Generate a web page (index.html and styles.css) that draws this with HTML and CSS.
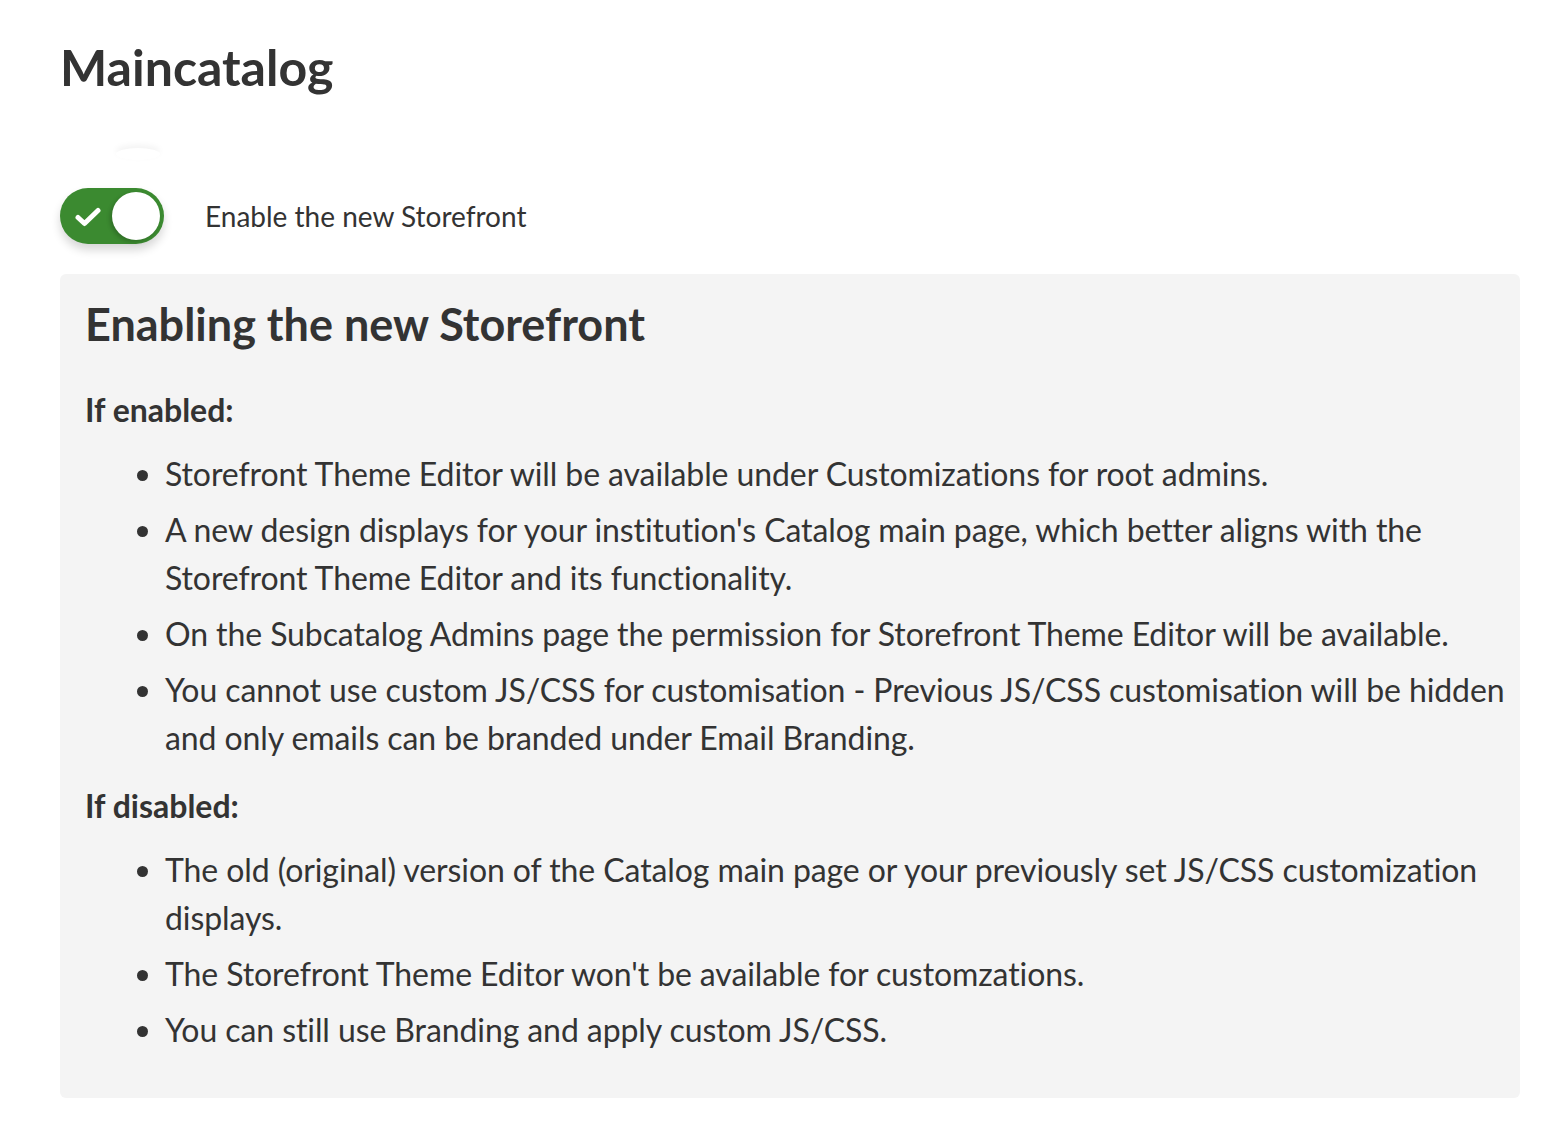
FILE: index.html
```html
<!DOCTYPE html>
<html lang="en">
<head>
<meta charset="utf-8">
<title>Maincatalog</title>
<link rel="stylesheet" href="styles.css">
</head>
<body>
<main class="page">
  <h1 class="title">Maincatalog</h1>
  <label class="toggle-row">
    <span class="toggle">
      <svg class="check" viewBox="0 0 26 20" width="26" height="20" aria-hidden="true">
        <path d="M3 10.5 L9.5 16.5 L23 3.5" fill="none" stroke="#fff" stroke-width="5" stroke-linecap="round" stroke-linejoin="round"/>
      </svg>
      <span class="knob"></span>
    </span>
    <span class="toggle-label">Enable the new Storefront</span>
  </label>
  <section class="info">
    <h2 class="info-title">Enabling the new Storefront</h2>
    <p class="info-sub">If enabled:</p>
    <ul class="info-list">
      <li>Storefront Theme Editor will be available under Customizations for root admins.</li>
      <li>A new design displays for your institution's Catalog main page, which better aligns with the Storefront Theme Editor and its functionality.</li>
      <li>On the Subcatalog Admins page the permission for Storefront Theme Editor will be available.</li>
      <li>You cannot use custom JS/CSS for customisation - Previous JS/CSS customisation will be hidden and only emails can be branded under Email Branding.</li>
    </ul>
    <p class="info-sub">If disabled:</p>
    <ul class="info-list">
      <li>The old (original) version of the Catalog main page or your previously set JS/CSS customization displays.</li>
      <li>The Storefront Theme Editor won't be available for customzations.</li>
      <li>You can still use Branding and apply custom JS/CSS.</li>
    </ul>
  </section>
</main>
</body>
</html>
```

FILE: styles.css
```css
html, body {
  margin: 0;
  padding: 0;
  background: #ffffff;
}
body {
  font-family: Lato, "Open Sans", sans-serif;
  color: #333333;
}
.page {
  padding: 37px 42px 0 60px;
}
.title {
  margin: 0 0 91px;
  font-size: 50px;
  font-weight: 700;
  line-height: 60px;
  color: #333333;
}
.toggle-row {
  position: relative;
  display: flex;
  align-items: center;
  gap: 41px;
}
.toggle-row::before {
  content: "";
  position: absolute;
  left: 56px;
  top: -40px;
  width: 44px;
  height: 12px;
  border-radius: 50%;
  background: #ffffff;
  box-shadow: 0 -3px 6px rgba(0,0,0,0.05);
}
.toggle {
  position: relative;
  display: flex;
  align-items: center;
  justify-content: space-between;
  box-sizing: border-box;
  width: 104px;
  height: 56px;
  padding: 0 4px 0 15px;
  border-radius: 28px;
  background: #3b8a30;
  box-shadow: 0 6px 10px rgba(0,0,0,0.16);
}
.check {
  display: block;
  margin-top: 2px;
}
.knob {
  width: 48px;
  height: 48px;
  border-radius: 50%;
  background: #ffffff;
  box-shadow: -2px 2px 4px rgba(0,0,0,0.2);
}
.toggle-label {
  font-size: 28px;
  line-height: 34px;
  color: #333333;
}
.info {
  margin-top: 30px;
  padding: 23px 12px 24px 25px;
  background: #f4f4f4;
  border-radius: 6px;
}
.info-title {
  margin: 0;
  font-size: 45px;
  font-weight: 700;
  line-height: 54px;
  color: #333333;
}
.info-sub {
  margin: 35px 0 0;
  font-size: 32px;
  font-weight: 700;
  line-height: 48px;
}
.info-list + .info-sub {
  margin-top: 20px;
}
.info-list {
  margin: 16px 0 20px;
  padding-left: 80px;
  font-size: 32px;
  line-height: 48px;
  letter-spacing: -0.09px;
}
.info-list li + li {
  margin-top: 8px;
}
```
